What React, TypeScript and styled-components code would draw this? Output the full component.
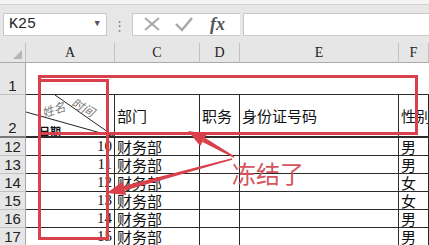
import React from 'react';
import styled, { createGlobalStyle } from 'styled-components';

const GlobalStyle = createGlobalStyle`
    html, body { margin: 0; padding: 0; background: #fff; overflow: hidden; }
    * { box-sizing: border-box; }
`;

const RED = '#d8404b';
const GRID = '#2b2b2b';

const Window = styled.div`
    position: relative;
    width: 429px;
    height: 245px;
    overflow: hidden;
    background: #fff;
    font-family: "Noto Sans CJK SC", "Liberation Sans", sans-serif;
`;

const TopStrip = styled.div`
    height: 5px;
    background: #f4f4f4;
    border-bottom: 1px solid #d2d2d2;
`;

const FormulaBar = styled.div`
    height: 38px;
    background: #e7e7e7;
    display: flex;
    align-items: center;
    padding: 0 0 0 3px;
`;

const NameBox = styled.div`
    width: 104px;
    height: 23px;
    background: #fff;
    border: 1px solid #c9c9c9;
    display: flex;
    align-items: center;
    justify-content: space-between;
    padding: 0 6px 0 5px;
    font-family: "Liberation Mono", monospace;
    font-size: 15px;
    color: #222;
`;

const Caret = styled.span`
    font-size: 9px;
    color: #555;
`;

const Dots = styled.div`
    width: 25px;
    text-align: center;
    color: #888;
    font-size: 13px;
    line-height: 1;
`;

const FxBox = styled.div`
    width: 108px;
    height: 23px;
    background: #fff;
    border: 1px solid #c9c9c9;
    border-right: none;
    display: flex;
    align-items: center;
    padding-left: 10px;
    gap: 14px;
`;

const Fx = styled.span`
    font-family: "Liberation Serif", serif;
    font-style: italic;
    font-weight: bold;
    font-size: 18px;
    color: #555;
    margin-left: 3px;
`;

const FormulaInput = styled.div`
    flex: 1;
    height: 23px;
    background: #fff;
    border: 1px solid #c9c9c9;
    border-right: none;
    margin-left: 3px;
`;

const Sheet = styled.div`
    display: grid;
    grid-template-columns: 26px 89px 85px 40px 159px 30px;
    grid-template-rows: 20px 32px 43px repeat(6, 18px);
`;

const Corner = styled.div`
    background: #e6e6e6;
    border-right: 1px solid #c2c2c2;
    border-bottom: 1px solid #a9a9a9;
    display: flex;
    align-items: flex-end;
    justify-content: flex-end;
    padding: 0 3px 3px 0;
`;

const ColHead = styled.div`
    background: #e6e6e6;
    border-right: 1px solid #c2c2c2;
    border-bottom: 1px solid #a9a9a9;
    display: flex;
    align-items: center;
    justify-content: center;
    font-family: "Liberation Serif", serif;
    font-size: 14px;
    color: #222;
`;

const RowHead = styled.div<{ $thick?: boolean }>`
    background: #e6e6e6;
    border-right: 1px solid #a9a9a9;
    border-bottom: ${(p) => p.$thick ? '2px solid #7a7a7a' : '1px solid #c2c2c2'};
    display: flex;
    align-items: flex-end;
    justify-content: center;
    font-family: "Liberation Sans", sans-serif;
    font-size: 15px;
    color: #222;
    line-height: 17px;
`;

const Merged = styled.div`
    grid-column: span 5;
    border-bottom: 1px solid ${GRID};
`;

const Cell = styled.div<{ $align?: string; $thick?: boolean; $serif?: boolean }>`
    border-right: 1px solid ${GRID};
    border-bottom: ${(p) => p.$thick ? `2px solid ${GRID}` : `1px solid ${GRID}`};
    display: flex;
    align-items: center;
    justify-content: ${(p) => p.$align || 'flex-start'};
    padding: 0 2px;
    font-family: ${(p) => p.$serif ? '"Liberation Serif", serif' : '"Noto Sans CJK SC", sans-serif'};
    font-size: 15px;
    color: #111;
    white-space: nowrap;
    overflow: hidden;
`;

const DiagCell = styled.div`
    position: relative;
    border-right: 1px solid ${GRID};
    border-bottom: 2px solid ${GRID};
    overflow: hidden;
`;

const DiagLabel = styled.span<{ $x: number; $y: number; $rot: number; $gray?: boolean }>`
    position: absolute;
    left: ${(p) => p.$x}px;
    top: ${(p) => p.$y}px;
    transform: rotate(${(p) => p.$rot}deg);
    transform-origin: left center;
    font-family: "Noto Sans CJK SC", sans-serif;
    font-size: ${(p) => p.$gray ? 12 : 11}px;
    line-height: 1;
    color: ${(p) => p.$gray ? '#7a7a7a' : '#111'};
    font-style: ${(p) => p.$gray ? 'italic' : 'normal'};
    font-weight: ${(p) => p.$gray ? 'normal' : 'bold'};
`;

const Overlay = styled.svg`
    position: absolute;
    left: 0;
    top: 0;
    pointer-events: none;
`;

const Callout = styled.div`
    position: absolute;
    left: 232px;
    top: 161px;
    font-family: "Noto Sans CJK SC", sans-serif;
    font-size: 24px;
    line-height: 1;
    color: #d4565e;
`;

const rows = [
    { n: 12, v: 10, sex: '男' },
    { n: 13, v: 11, sex: '男' },
    { n: 14, v: 12, sex: '女' },
    { n: 15, v: 13, sex: '女' },
    { n: 16, v: 14, sex: '男' },
    { n: 17, v: 15, sex: '男' },
];

const Arrow = ({ x1, y1, x2, y2 }: { x1: number; y1: number; x2: number; y2: number }) => {
    const a = Math.atan2(y2 - y1, x2 - x1);
    const len = 18, w = 7;
    const bx = x2 - Math.cos(a) * len, by = y2 - Math.sin(a) * len;
    const nx = -Math.sin(a), ny = Math.cos(a);
    return (
        <g fill={RED} stroke="none">
            <polygon points={`${x1 + nx * 0.8},${y1 + ny * 0.8} ${bx + nx * 2.4},${by + ny * 2.4} ${bx - nx * 2.4},${by - ny * 2.4} ${x1 - nx * 0.8},${y1 - ny * 0.8}`} />
            <polygon points={`${x2},${y2} ${bx + nx * w},${by + ny * w} ${bx - nx * w},${by - ny * w}`} />
        </g>
    );
};

const App = () => {
    return (
        <Window>
            <GlobalStyle />
            <TopStrip />
            <FormulaBar>
                <NameBox>K25<Caret>▼</Caret></NameBox>
                <Dots>⋮</Dots>
                <FxBox>
                    <svg width="18" height="16" viewBox="0 0 18 16">
                        <path d="M2 2 L16 14 M16 2 L2 14" stroke="#a7a7a7" strokeWidth="2" fill="none" />
                    </svg>
                    <svg width="18" height="16" viewBox="0 0 18 16">
                        <path d="M1 8 L7 14 L17 2" stroke="#a7a7a7" strokeWidth="2.4" fill="none" />
                    </svg>
                    <Fx>fx</Fx>
                </FxBox>
                <FormulaInput />
            </FormulaBar>
            <Sheet>
                <Corner>
                    <svg width="9" height="9" viewBox="0 0 9 9"><polygon points="9,0 9,9 0,9" fill="#b5b5b5" /></svg>
                </Corner>
                <ColHead>A</ColHead>
                <ColHead>C</ColHead>
                <ColHead>D</ColHead>
                <ColHead>E</ColHead>
                <ColHead>F</ColHead>

                <RowHead>1</RowHead>
                <Merged />

                <RowHead $thick>2</RowHead>
                <DiagCell>
                    <svg width="89" height="43" style={{ position: 'absolute', left: 0, top: 0 }}>
                        <line x1="0" y1="17" x2="89" y2="42" stroke="#222" strokeWidth="1" />
                        <line x1="29" y1="0" x2="89" y2="42" stroke="#222" strokeWidth="1" />
                    </svg>
                    <DiagLabel $gray $x={16} $y={12} $rot={-18}>姓名</DiagLabel>
                    <DiagLabel $gray $x={47} $y={0} $rot={30}>时间</DiagLabel>
                    <DiagLabel $x={13} $y={31} $rot={0}>日期</DiagLabel>
                </DiagCell>
                <Cell $thick>部门</Cell>
                <Cell $thick>职务</Cell>
                <Cell $thick>身份证号码</Cell>
                <Cell $thick>性别</Cell>

                {rows.map((r) => (
                    <React.Fragment key={r.n}>
                        <RowHead>{r.n}</RowHead>
                        <Cell $align="flex-end" $serif>{r.v}</Cell>
                        <Cell>财务部</Cell>
                        <Cell />
                        <Cell />
                        <Cell>{r.sex}</Cell>
                    </React.Fragment>
                ))}
            </Sheet>

            <Overlay width="429" height="245">
                <rect x="39.5" y="76.5" width="377" height="57" fill="none" stroke={RED} strokeWidth="3" />
                <rect x="39.5" y="80.5" width="68" height="158" fill="none" stroke={RED} strokeWidth="3" />
                <Arrow x1={234} y1={157} x2={188} y2={131} />
                <Arrow x1={232} y1={159} x2={107} y2={193} />
            </Overlay>
            <Callout>冻结了</Callout>
        </Window>
    );
};

export default App;
